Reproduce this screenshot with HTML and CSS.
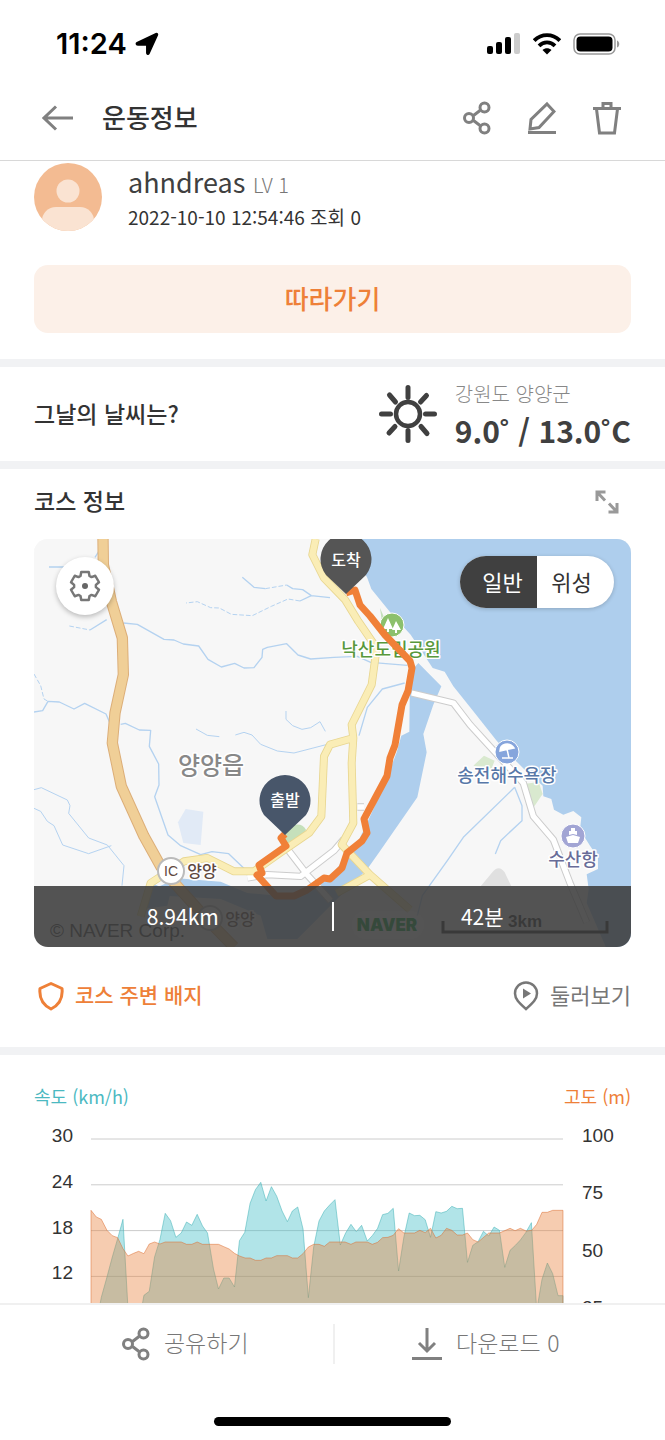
FILE: index.html
```
<!DOCTYPE html>
<html lang="ko">
<head>
    <meta charset="utf-8">
    <meta name="viewport" content="width=device-width, initial-scale=1">
    <title>운동정보</title>
    <link rel="stylesheet" href="styles.css">
</head>
<body>
    <svg class="sprite" aria-hidden="true">
        <symbol id="icon-share" viewBox="0 0 28 34">
            <path d="M10.500 14.500 17 9.500M10.500 19.500 17 24.500"/>
            <circle cx="6" cy="17" r="4.500"/>
            <circle cx="21.500" cy="6.500" r="4.500"/>
            <circle cx="21.500" cy="27.500" r="4.500"/>
        </symbol>
    </svg>

    <header class="header">
        <div class="status-bar">
            <div class="status-left">
                <span class="time">11:24</span>
                <svg width="24" height="24" viewBox="0 0 24 24"><path d="M2 10.700 21 1.700c1-.5 1.800.3 1.400 1.300L14 21.500c-.6 1.300-2.200 1-2.200-.5V13H3.100c-1.700 0-2.400-1.600-1.100-2.300z" stroke="#000" stroke-width="1.500"/></svg>
            </div>
            <div class="status-right">
                <svg width="34" height="22" viewBox="0 0 34 22">
                    <rect x="0" y="13" width="6" height="8" rx="2"/>
                    <rect x="9" y="9" width="6" height="12" rx="2"/>
                    <rect x="18" y="4" width="6" height="17" rx="2"/>
                    <rect x="27" y="0" width="6" height="21" rx="2" fill="#ccc"/>
                </svg>
                <svg width="28" height="22" viewBox="0 0 28 22">
                    <g fill="none" stroke="#000" stroke-width="3.800">
                        <path d="M1.200 7.600C8.500.4 19.500.4 26.800 7.600"/>
                        <path d="M6 12.800c4.600-4.500 11.400-4.500 16 0"/>
                    </g>
                    <path d="M9.500 17c2.600-2.400 6.400-2.400 9 0L14 21.500z"/>
                </svg>
                <svg width="48" height="22" viewBox="0 0 48 22">
                    <rect x="1" y="1" width="41" height="20" rx="6" fill="none" stroke="#999" stroke-width="1.500"/>
                    <rect x="3.500" y="3.500" width="36" height="15" rx="4"/>
                    <path d="M44 7.500c3 1 3 6 0 7z" fill="#999"/>
                </svg>
            </div>
        </div>
        <div class="title-bar">
            <button class="icon-btn" type="button" aria-label="뒤로">
                <svg class="icon" width="32" height="26" viewBox="0 0 32 26"><path d="M2 13h29M14 1.500 2 13l12 11.500"/></svg>
            </button>
            <h1>운동정보</h1>
            <div class="actions">
                <button class="icon-btn" type="button" aria-label="공유">
                    <svg class="icon" width="28" height="34"><use href="#icon-share"/></svg>
                </button>
                <button class="icon-btn" type="button" aria-label="수정">
                    <svg class="icon" width="28" height="34" viewBox="0 0 28 34"><path d="M19 3 26 10.500 11 26.500 2 28l1-9.500zM0 31.500h28"/></svg>
                </button>
                <button class="icon-btn" type="button" aria-label="삭제">
                    <svg class="icon" width="28" height="34" viewBox="0 0 28 34"><path d="M0 7.500h28M3.500 8l3 24h15l3-24M10 7V2.500h8V7"/></svg>
                </button>
            </div>
        </div>
    </header>

    <main class="content">
        <section class="profile">
            <div class="user">
                <svg class="avatar" width="68" height="68" viewBox="0 0 68 68">
                    <clipPath id="avatarClip"><circle cx="34" cy="34" r="34"/></clipPath>
                    <g clip-path="url(#avatarClip)">
                        <rect width="68" height="68" fill="#f3bb92"/>
                        <circle cx="34" cy="28" r="11.500" fill="#fae3d2"/>
                        <rect x="8" y="44" width="52" height="40" rx="14" fill="#fae3d2"/>
                    </g>
                </svg>
                <div>
                    <p class="name">ahndreas <span class="level">LV 1</span></p>
                    <p class="meta">2022-10-10 12:54:46 조회 0</p>
                </div>
            </div>
            <button class="follow-btn" type="button">따라가기</button>
        </section>

        <section class="weather">
            <h2>그날의 날씨는?</h2>
            <div class="weather-info">
                <svg width="58" height="58" viewBox="0 0 58 58" fill="none" stroke="#404040" stroke-width="5" stroke-linecap="round">
                    <circle cx="29" cy="29" r="12" stroke-width="4.500"/>
                    <path d="M29 2.500v10M29 45.500v10M2.500 29h9M46.500 29h9M10.500 10l6 7M47.500 10.500l-6 6.500M10 48l6-6.500M48 48.500l-6-7"/>
                </svg>
                <div>
                    <p class="place">강원도 양양군</p>
                    <p class="temp">9.0˚ / 13.0˚C</p>
                </div>
            </div>
        </section>

        <section class="course">
            <div class="course-head">
                <h2>코스 정보</h2>
                <button class="icon-btn" type="button" aria-label="지도 확대">
                    <svg width="24" height="24" viewBox="0 0 24 24" fill="none" stroke="#999" stroke-width="3"><path d="M2 11V2H10.500M2 2l8 8.500M22 13v9H13.500M22 22l-8-8.500"/></svg>
                </button>
            </div>

            <div class="map">
                <svg class="map-canvas" viewBox="0 0 597 408" preserveAspectRatio="xMidYMid slice">
                    <g transform="scale(.33333)" fill="none" stroke-linejoin="round">
                        <rect width="1800" height="1230" fill="#f7f7f7"/>

                        <!-- sea and river -->
                        <g fill="#aeceed">
                            <path d="M940 0 1000 117 1012 150 1068 219 1130 287 1196 387 1232 398 1258 442 1318 517 1388 605 1430 650 1470 690 1526 740 1528 772 1552 780 1560 812 1588 827 1618 816 1642 835 1638 872 1668 920 1692 955 1692 990 1658 1006 1664 1050 1658 1092 1718 1230H1800V0z"/>
                            <path d="M1153 372 1128 400 1126 578 1102 590 1088 640 1050 740 1000 850 976 900 940 945 886 1020 780 1075 640 1062 560 1028 430 1018 370 1045 390 1070 560 1080 680 1130 700 1200 790 1200 900 1090 1000 990 1034 942 1150 775 1178 640 1168 585 1198 497 1222 442z"/>
                            <path d="M350 1030 330 1110 400 1100 410 1060z"/>
                        </g>
                        <path d="M455 810 508 818 500 918 448 912 432 850z" fill="#e1eaf6"/>
                        <path d="M750 900c0-40 50-60 66-28l-10 30-54 20z" fill="#c5e0bb"/>
                        <path d="M1318 680 1350 650 1382 665 1372 690zM1470 735l44-6 12 36-26 38z" fill="#d9e9cf"/>
                        <path d="M1038 207l22 50-14 6z" fill="#c5e0bb"/>
                        <path d="M1340 1042 1375 1000Q1394 976 1412 1000L1432 1042z" fill="#e0e0e0"/>

                        <!-- streams -->
                        <g stroke="#b4d2f0" stroke-width="4">
                            <path d="M45 84h45M183 55 194 38M168 273 218 242M268 252 310 256 390 301 420 303 448 315 494 321 522 361 562 384 602 373 630 387 660 386 684 355 686 331 700 325 758 314 792 348 830 360 900 355M900 355 970 352 1010 370 1120 379"/>
                            <path d="M625 115 660 145 694 149M758 138 776 149 806 152 832 170 888 176M832 170 798 186"/>
                            <path d="M106 261 168 273M694 149 758 138M798 186 762 180 712 202 655 230 592 226 556 207 530 206 490 188 456 192M0 405 20 440 30 480 42 487" stroke-width="3" stroke-dasharray="14 6"/>
                            <path d="M42 487 76 489 120 510 152 493 216 525 228 553M0 519 26 515 42 487M260 556 274 553 316 573 350 574 346 622 374 675 375 738 362 773 402 888 440 920 500 947 534 938 584 944 632 990"/>
                            <path d="M0 752 22 746 100 783 108 800 104 823 164 897 220 918 270 980 264 1040M0 808 20 817 40 847 60 860 86 918 164 944 232 920" stroke-width="3"/>
                            <path d="M486 570 520 589 556 593M604 588 630 580 654 588 680 616 730 636 780 642 880 616M756 516 756 541 776 560 804 571 830 566 858 548 874 577" stroke-width="3"/>
                            <path d="M1112 432 1045 450 1000 505 975 590M1442 745 1288 895 1240 965 1165 1070 1150 1130M1442 745 1464 800 1464 845 1400 905 1384 945"/>
                        </g>

                        <!-- minor roads -->
                        <g>
                            <path class="road-edge" d="M640 1017 700 1007 800 1012 900 935 930 900M760 930 820 1008 890 1085M970 804h20M1133 462 1258 492 1308 557 1358 612 1468 732 1498 832 1558 902 1608 1032 1658 1150"/>
                            <path class="road" d="M640 1017 700 1007 800 1012 900 935 930 900M760 930 820 1008 890 1085M970 804h20M1133 462 1258 492 1308 557 1358 612 1468 732 1498 832 1558 902 1608 1032 1658 1150"/>
                        </g>

                        <!-- main roads -->
                        <g>
                            <path class="trunk-edge" d="M845 0 835 47 870 117 933 182 973 247 1028 327 1013 437 953 557 958 597 888 617 870 652 862 832 825 882 740 940 660 997 600 997 520 957 450 967 350 1032 320 1132M958 597 953 672 958 852 923 917 1008 1007 1128 1112M1008 1007 908 1062"/>
                            <path class="trunk" d="M845 0 835 47 870 117 933 182 973 247 1028 327 1013 437 953 557 958 597 888 617 870 652 862 832 825 882 740 940 660 997 600 997 520 957 450 967 350 1032 320 1132M958 597 953 672 958 852 923 917 1008 1007 1128 1112M1008 1007 908 1062"/>
                            <path class="highway-edge" d="M207 0 208 77 232 187 265 297 268 407 243 522 235 612 262 742 330 892 380 982 430 1042 520 1142 600 1224"/>
                            <path class="highway" d="M207 0 208 77 232 187 265 297 268 407 243 522 235 612 262 742 330 892 380 982 430 1042 520 1142 600 1224"/>
                        </g>
                    </g>

                    <!-- place names -->
                    <g class="map-labels">
                        <text x="177" y="235" class="town">양양읍</text>
                        <circle cx="358" cy="86" r="12" fill="#8cc06c" stroke="#fff"/>
                        <path d="M354 79l5 11h-4v3h-2v-3h-4zM362 82l5 9h-4v3h-2v-3h-3z" fill="#fff"/>
                        <text x="357" y="117" class="park">낙산도립공원</text>
                        <circle cx="473" cy="213" r="12" fill="#86a5dc" stroke="#fff"/>
                        <path d="M466 212c0-7 9-10 14-3zM473 210l2 9" fill="#fff" stroke="#fff" stroke-width="1.500"/>
                        <path d="M468 219h11" stroke="#fff" stroke-width="1.500"/>
                        <text x="473" y="243" class="beach">송전해수욕장</text>
                        <circle cx="539" cy="297" r="12" fill="#a2a5d4" stroke="#fff"/>
                        <path d="M532 298l7-2 7 2-2 6h-10zM535 292h8v4l-4-1-4 1zM537 289h4v3h-4z" fill="#fff"/>
                        <text x="539" y="327" class="port">수산항</text>
                        <circle cx="176" cy="379" r="12" class="ic"/>
                        <text x="206" y="386" class="station">양양</text>
                        <circle cx="137" cy="332" r="13" class="ic"/>
                        <text x="137" y="337" class="ic-text">IC</text>
                        <text x="168" y="338" class="station">양양</text>
                        <text x="16" y="398" class="credit">© NAVER Corp.</text>
                        <rect x="318" y="372" width="72" height="28" rx="14" fill="#fff" opacity=".3"/>
                        <text x="353" y="392" class="naver">NAVER</text>
                        <path d="M409 382v11h164v-11" fill="none" stroke="#222" stroke-width="3"/>
                        <text x="491" y="388" class="scale">3km</text>
                    </g>

                    <path class="route" d="M312 54 321 51 326 66 336 77 351 96 376 122 378 129 374 152 368 166 361 206 356 219 353 237 330 280 333 294 328 302 313 314 308 329 296 340 290 339 273 351 260 357 242 357 223 336 228 334 225 326 252 307 247 299 251 295"/>
                    <path d="M312 55 292 36a25.500 25.500 0 1 1 40 0z" fill="#555"/>
                    <text x="312" y="27" class="pin-text">도착</text>
                    <path d="M251 296 230 276a25.500 25.500 0 1 1 42 0z" fill="#48566a"/>
                    <text x="251" y="267" class="pin-text">출발</text>
                </svg>

                <button class="gear-btn" type="button" aria-label="지도 설정">
                    <svg width="32" height="32" viewBox="0 0 32 32"><path d="M12.250 2h7.500l.75 4 2 1.100 3.750-1.350L30 12.250l-3.100 2.600v2.300l3.100 2.600-3.750 6.500-3.750-1.350-2 1.100-.75 4h-7.500l-.75-4-2-1.100-3.750 1.350L2 19.750l3.100-2.600v-2.300L2 12.250l3.750-6.500L9.500 7.100l2-1.100z" fill="none" stroke="#777" stroke-width="2.500" stroke-linejoin="round"/><circle cx="16" cy="16" r="3" fill="#666"/></svg>
                </button>

                <div class="map-type">
                    <input type="radio" name="mapType" id="typeNormal" checked>
                    <label for="typeNormal">일반</label>
                    <input type="radio" name="mapType" id="typeSatellite">
                    <label for="typeSatellite">위성</label>
                </div>

                <div class="map-summary">
                    <span>8.94km</span>
                    <span>42분</span>
                </div>
            </div>

            <div class="course-links">
                <a class="badge-link" href="#">
                    <svg width="26" height="30" viewBox="0 0 26 30"><path d="M13 2.500 24 7.500C25 17 21 24 13 28 5 24 1 17 2 7.500z" fill="none" stroke="currentColor" stroke-width="3" stroke-linejoin="round"/></svg>
                    <span>코스 주변 배지</span>
                </a>
                <a class="tour-link" href="#">
                    <svg width="26" height="30" viewBox="0 0 26 30"><path d="M13 28C6 22 2 18 2 12.500a11 11 0 0 1 22 0C24 18 20 22 13 28z" fill="none" stroke="currentColor" stroke-width="2.500"/><path d="M10 7.500 18 12.500 10 17.500z" fill="currentColor"/></svg>
                    <span>둘러보기</span>
                </a>
            </div>
        </section>

        <section class="graph">
            <div class="graph-head">
                <span class="speed">속도 (km/h)</span>
                <span class="altitude">고도 (m)</span>
            </div>
            <div class="plot">
                <div class="axis axis-left">
                    <span>30</span><span>24</span><span>18</span><span>12</span><span>6</span><span>0</span>
                </div>
                <svg class="plot-area" viewBox="0 0 1418 687" preserveAspectRatio="none">
                    <path class="grid" d="M0 0H1418M0 137.400H1418M0 274.800H1418M0 412.200H1418M0 549.600H1418M0 687H1418"/>
                    <path class="speed-area" d="M0 687 15 560 31 475 48 414 64 354 80 299 96 241 110 489 112 687 143 560 159 469 175 457 191 354 207 302 223 223 239 245 255 295 271 282 287 249 303 259 319 226 335 261 350 282 368 390 383 450 399 417 415 417 431 444 446 305 462 280 478 193 494 152 510 130 526 186 542 143 558 172 574 216 590 248 605 216 621 204 637 270 653 476 669 324 685 246 701 216 717 198 733 182 749 318 765 282 781 256 797 278 813 259 830 306 845 290 861 268 876 227 892 223 908 208 924 396 940 294 956 222 972 230 988 229 1004 242 1020 295 1036 218 1052 222 1068 217 1084 202 1100 209 1116 208 1131 370 1147 319 1163 308 1179 277 1195 291 1211 264 1227 274 1243 385 1259 334 1275 319 1290 303 1306 281 1323 251 1339 514 1355 421 1371 372 1387 404 1403 470 1418 470V687z"/>
                    <path class="altitude-area" d="M0 687V214L16 234 31 241 48 274 64 290 80 296 96 329 111 351 128 343 143 337 159 344 175 315 191 309 207 315 223 309 271 309 287 316 303 316 319 309 335 316 383 316 399 323 415 330 431 343 446 351 463 357 478 357 494 364 510 364 526 357 542 357 558 350 590 350 605 357 621 357 637 344 653 324 669 316 685 316 701 322 717 309 763 309 781 316 796 309 830 309 845 316 861 310 876 296 892 295 908 289 924 269 940 282 972 282 988 274 1004 281 1020 268 1036 297 1052 289 1068 268 1084 274 1100 288 1116 288 1131 282 1147 302 1163 309 1195 282 1227 282 1259 268 1274 275 1290 268 1307 276 1324 274 1339 256 1355 220 1371 220 1387 214 1418 214V687z"/>
                </svg>
                <div class="axis axis-right">
                    <span>100</span><span>75</span><span>50</span><span>25</span><span>0</span>
                </div>
            </div>
        </section>
    </main>

    <footer class="footer">
        <div class="footer-buttons">
            <button class="share-btn" type="button">
                <svg class="icon" width="28" height="34"><use href="#icon-share"/></svg>
                <span>공유하기</span>
            </button>
            <button class="download-btn" type="button">
                <svg class="icon" width="30" height="34" viewBox="0 0 30 34"><path d="M15 1v23M7 16l8 8 8-8M0 31.500h30"/></svg>
                <span>다운로드 0</span>
            </button>
        </div>
        <div class="home-indicator"></div>
    </footer>
</body>
</html>
```

FILE: styles.css
```
* {
    box-sizing: border-box;
}

body {
    display: flex;
    flex-direction: column;
    height: 100vh;
    margin: 0;
    background-color: #fff;
    color: #333;
    font-family: "Noto Sans CJK KR", sans-serif;
}

h1, h2, p {
    margin: 0;
}

h1, h2 {
    font-weight: 500;
}

h2 {
    padding-bottom: 3px;
    font-size: 23px;
    line-height: 32px;
}

svg {
    flex: none;
    display: block;
}

button {
    font-family: inherit;
    border: none;
    background: none;
    padding: 0;
    cursor: pointer;
}

a {
    text-decoration: none;
}

.sprite {
    position: absolute;
    width: 0;
    height: 0;
}

.icon {
    fill: none;
    stroke: #808080;
    stroke-width: 3;
}

/* Header */
.header {
    flex: none;
    border-bottom: 1px solid #d8d8d8;
}

.status-bar {
    display: flex;
    justify-content: space-between;
    align-items: center;
    height: 76px;
    padding: 12px 44px 0 56px;
}

.status-left, .status-right {
    display: flex;
    align-items: center;
    gap: 12px;
}

.status-left {
    gap: 8px;
}

.time {
    color: #000;
    font-family: Inter, sans-serif;
    font-size: 29px;
    font-weight: 600;
    line-height: 32px;
}

.title-bar {
    display: flex;
    align-items: center;
    height: 84px;
    padding: 0 44px 0 42px;
}

.title-bar h1 {
    margin-left: 28px;
    padding-bottom: 3px;
    font-size: 26px;
    line-height: 36px;
}

.actions {
    display: flex;
    gap: 37px;
    margin-left: auto;
}

/* Content */
.content {
    flex: 1;
    min-height: 0;
    overflow-y: auto;
    scrollbar-width: none;
}

.content section + section {
    border-top: 8px solid #f1f2f4;
}

.profile {
    padding: 2px 34px 26px;
}

.user {
    display: flex;
    gap: 26px;
}

.name {
    color: #404040;
    font-size: 27px;
    line-height: 38px;
}

.level {
    color: #777;
    font-size: 20px;
    font-weight: 300;
}

.meta {
    font-size: 19px;
    line-height: 26px;
}

.follow-btn {
    width: 100%;
    height: 68px;
    margin-top: 34px;
    padding-bottom: 4px;
    border-radius: 14px;
    background-color: #fcf0e8;
    color: #ee8038;
    font-size: 26px;
    font-weight: 500;
}

.weather {
    display: flex;
    justify-content: space-between;
    align-items: center;
    height: 102px;
    padding: 0 34px;
}

.weather-info {
    display: flex;
    align-items: center;
    gap: 18px;
}

.place {
    color: #888;
    font-size: 20px;
    font-weight: 300;
    line-height: 32px;
}

.temp {
    color: #404040;
    font-size: 30px;
    font-weight: bold;
    line-height: 40px;
}

.course {
    padding: 0 34px;
}

.course-head {
    display: flex;
    justify-content: space-between;
    align-items: center;
    height: 70px;
    padding: 0 12px 5px 0;
}

/* Map */
.map {
    position: relative;
    aspect-ratio: 597 / 408;
    border-radius: 14px;
    overflow: hidden;
    background-color: #f7f7f7;
}

.map-canvas {
    width: 100%;
    height: 100%;
}

.road-edge {
    stroke: #ccc;
    stroke-width: 22;
}

.road {
    stroke: #fff;
    stroke-width: 16;
}

.trunk-edge {
    stroke: #e8d690;
    stroke-width: 24;
}

.trunk {
    stroke: #faedb6;
    stroke-width: 19;
}

.highway-edge {
    stroke: #dcae78;
    stroke-width: 34;
}

.highway {
    stroke: #f0cf97;
    stroke-width: 28;
}

.route {
    fill: none;
    stroke: #f08038;
    stroke-width: 7;
    stroke-linejoin: round;
}

.map-labels text {
    font-size: 18px;
    font-weight: 500;
    text-anchor: middle;
    stroke: #fff;
    stroke-width: 3px;
    stroke-linejoin: round;
    paint-order: stroke;
}

.map-labels .town {
    fill: #888;
    font-size: 24px;
}

.map-labels .park {
    fill: #58983c;
}

.map-labels .beach {
    fill: #5878a8;
}

.map-labels .port {
    fill: #686c98;
}

.map-labels .station {
    fill: #604840;
    font-size: 16px;
}

.map-labels .ic {
    fill: #fff;
    stroke: #bbb;
    stroke-width: 2px;
}

.map-labels .ic-text {
    fill: #604840;
    font-family: "Liberation Sans", sans-serif;
    font-size: 14px;
    stroke: none;
}

.map-labels .credit {
    fill: #444;
    font-family: "Liberation Sans", sans-serif;
    font-size: 19px;
    font-weight: 400;
    text-anchor: start;
    stroke: none;
}

.map-labels .naver {
    fill: #00a030;
    font-family: Inter, sans-serif;
    font-size: 17px;
    font-weight: 900;
    stroke: none;
}

.map-labels .scale {
    fill: #222;
    font-family: "Liberation Sans", sans-serif;
    font-size: 17px;
    font-weight: bold;
    stroke: none;
}

.pin-text {
    fill: #fff;
    font-size: 16px;
    font-weight: 500;
    text-anchor: middle;
}

.gear-btn {
    position: absolute;
    top: 18px;
    left: 22px;
    display: flex;
    align-items: center;
    justify-content: center;
    width: 58px;
    height: 58px;
    border-radius: 50%;
    background-color: #fff;
    box-shadow: 0 2px 5px rgba(0, 0, 0, 0.25);
}

.map-type {
    position: absolute;
    top: 17px;
    right: 17px;
    display: flex;
    border-radius: 26px;
    overflow: hidden;
    background-color: #fff;
    box-shadow: 0 1px 4px rgba(0, 0, 0, 0.2);
}

.map-type input {
    position: absolute;
    opacity: 0;
}

.map-type label {
    width: 77px;
    padding: 0 8px 2px 0;
    font-size: 22px;
    line-height: 50px;
    text-align: center;
    cursor: pointer;
}

.map-type label:first-of-type {
    padding: 0 0 2px 8px;
}

.map-type input:checked + label {
    background-color: #404040;
    color: #fff;
}

.map-summary {
    position: absolute;
    left: 0;
    right: 0;
    bottom: 0;
    display: flex;
    padding: 16px 0;
    background-color: rgba(60, 60, 60, 0.88);
    color: #fff;
    font-size: 21px;
    line-height: 29px;
    text-align: center;
}

.map-summary span {
    flex: 1;
}

.map-summary span + span {
    border-left: 2px solid #fff;
}

.course-links {
    display: flex;
    justify-content: space-between;
    align-items: center;
    height: 100px;
    padding: 0 0 3px 4px;
}

.course-links a {
    display: flex;
    align-items: center;
    gap: 11px;
    font-size: 22px;
}

.course-links span, .footer-buttons span {
    padding-bottom: 4px;
}

.course-links .badge-link {
    color: #ee8038;
    font-size: 21px;
    font-weight: 500;
}

.course-links .tour-link {
    color: #777;
}

/* Graph */
.graph-head {
    display: flex;
    justify-content: space-between;
    padding: 27px 34px 16px;
    font-size: 18px;
    line-height: 28px;
}

.speed {
    color: #4bb9c1;
}

.altitude {
    color: #ee8038;
}

.plot {
    display: flex;
    align-items: flex-start;
}

.axis {
    display: flex;
    flex-direction: column;
    justify-content: space-between;
    height: 249px;
    font-family: "Liberation Sans", sans-serif;
    font-size: 19px;
    line-height: 20px;
}

.axis-left {
    width: 91px;
    padding-right: 18px;
    text-align: right;
}

.axis-right {
    width: 102px;
    padding-left: 19px;
}

.plot-area {
    flex: 1;
    min-width: 0;
    height: 229px;
    margin-top: 13px;
    overflow: visible;
}

.plot-area path {
    vector-effect: non-scaling-stroke;
}

.grid {
    fill: none;
    stroke: #ccc;
    stroke-width: 1;
}

.speed-area {
    fill: rgba(60, 187, 197, 0.4);
    stroke: rgba(60, 175, 180, 0.5);
}

.altitude-area {
    fill: rgba(232, 127, 57, 0.4);
    stroke: rgba(220, 110, 50, 0.5);
}

/* Footer */
.footer {
    flex: none;
    border-top: 2px solid #f0f0f0;
    background-color: #fff;
}

.footer-buttons {
    display: flex;
    padding: 19px 0;
}

.footer-buttons button {
    display: flex;
    align-items: center;
    justify-content: center;
    gap: 14px;
    width: 50%;
    height: 40px;
    color: #777;
    font-size: 23px;
    font-weight: 300;
}

.footer-buttons .share-btn {
    padding-left: 38px;
}

.footer-buttons .download-btn {
    padding-right: 28px;
    border-left: 2px solid #f0f0f0;
}

.home-indicator {
    width: 237px;
    height: 9px;
    margin: 34px auto 14px;
    border-radius: 5px;
    background-color: #000;
}
```
